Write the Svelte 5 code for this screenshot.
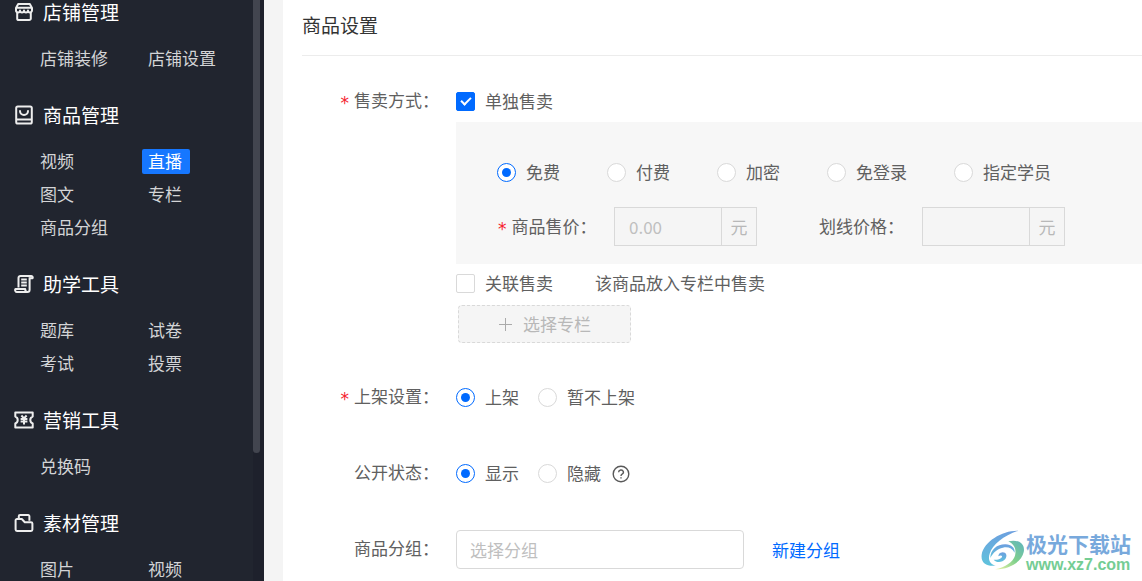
<script>
    const menu = [
        { title: '店铺管理', icon: 'shop', items: ['店铺装修', '店铺设置'] },
        { title: '商品管理', icon: 'goods', items: ['视频', '直播', '图文', '专栏', '商品分组'] },
        { title: '助学工具', icon: 'scroll', items: ['题库', '试卷', '考试', '投票'] },
        { title: '营销工具', icon: 'coupon', items: ['兑换码'] },
        { title: '素材管理', icon: 'folder', items: ['图片', '视频'] },
    ];
    const saleTypes = ['免费', '付费', '加密', '免登录', '指定学员'];

    let active = $state('商品管理/直播');
    let single = $state(true);
    let related = $state(false);
    let saleType = $state('免费');
    let shelf = $state('上架');
    let visible = $state('显示');
    let group = $state('');
</script>

{#snippet icon(name)}
    <svg class="icon" viewBox="0 0 20 20" aria-hidden="true">
        {#if name === 'shop'}
            <path d="M4.2 2h11.6L18 6v2.2a2 2 0 0 1-4 .4 2 2 0 0 1-4 0 2 2 0 0 1-4 0 2 2 0 0 1-4-.4V6z" />
            <path d="M2.5 5.8h15M3.2 10v6.4A1.6 1.6 0 0 0 4.8 18h10.4a1.6 1.6 0 0 0 1.6-1.6V10" />
        {:else if name === 'goods'}
            <rect x="2.2" y="1.5" width="15.6" height="17" rx="1.6" />
            <path d="M2.2 14.4h15.6M6 5.2v.8a4 4 0 0 0 8 0v-.8" />
        {:else if name === 'scroll'}
            <path d="M4.5 13.5V3.8A2 2 0 0 1 6.5 2H17a1.6 1.6 0 0 1 1.6 2.2H15.6" />
            <path d="M15.6 3.2v12.6a2.2 2.2 0 0 1-2.2 2.2H3a2 2 0 0 1-1.6-3h9.8c0 2 .6 3 2.2 3" />
            <path d="M7.2 5.5h5.6M7.2 8.5h5.6M7.2 11.5h5.6" />
        {:else if name === 'coupon'}
            <path d="M1.3 2.6h17.4v4a3.6 3.6 0 0 0 0 6.8v4H1.3v-4a3.6 3.6 0 0 0 0-6.8z" />
            <path d="M7.4 5.5 10 8.4l2.6-2.9M6.6 9h6.8M6.6 11.6h6.8M10 8.4v6" />
        {:else}
            <path d="M4.8 6V3.2A1.2 1.2 0 0 1 6 2h8.2a1.2 1.2 0 0 1 1.2 1.2v4.6" />
            <path d="M1.6 7.4A1.4 1.4 0 0 1 3 6h4.8l3 3.2h6.2a1.4 1.4 0 0 1 1.4 1.4v6a1.4 1.4 0 0 1-1.4 1.4H3a1.4 1.4 0 0 1-1.4-1.4z" />
        {/if}
    </svg>
{/snippet}

<div class="layout">
    <aside>
        <nav>
            {#each menu as section}
                <section>
                    <h2>{@render icon(section.icon)}{section.title}</h2>
                    <ul>
                        {#each section.items as item}
                            {@const key = section.title + '/' + item}
                            <li>
                                <a href="#/" class={{ active: active === key }} onclick={() => (active = key)}>{item}</a>
                            </li>
                        {/each}
                    </ul>
                </section>
            {/each}
        </nav>
        <div class="scrollbar"><div class="thumb"></div></div>
    </aside>

    <main>
        <h1>商品设置</h1>
        <form>
            <div class="field sale">
                <div class="label"><span class="mark">*</span>售卖方式：</div>
                <div class="content">
                    <div class="line">
                        <label class="option"><input type="checkbox" bind:checked={single} /><span>单独售卖</span></label>
                    </div>
                    <div class="panel">
                        <div class="types">
                            {#each saleTypes as type}
                                <label class="option"><input type="radio" name="type" value={type} bind:group={saleType} /><span>{type}</span></label>
                            {/each}
                        </div>
                        <div class="prices">
                            <label class="price-label required" for="price"><span class="mark">*</span>商品售价：</label>
                            <div class="price"><input id="price" type="text" placeholder="0.00" disabled /><span>元</span></div>
                            <label class="price-label" for="line-price">划线价格：</label>
                            <div class="price"><input id="line-price" type="text" disabled /><span>元</span></div>
                        </div>
                    </div>
                    <div class="line">
                        <label class="option"><input type="checkbox" bind:checked={related} /><span>关联售卖</span></label>
                        <span class="note">该商品放入专栏中售卖</span>
                    </div>
                    <button type="button" class="pick" disabled={!related}>
                        <svg viewBox="0 0 14 14" aria-hidden="true"><path d="M7.5 1v13M1 7.5h13" /></svg>
                        <span>选择专栏</span>
                    </button>
                </div>
            </div>

            <div class="field">
                <div class="label"><span class="mark">*</span>上架设置：</div>
                <div class="content choices">
                    {#each ['上架', '暂不上架'] as item}
                        <label class="option"><input type="radio" name="shelf" value={item} bind:group={shelf} /><span>{item}</span></label>
                    {/each}
                </div>
            </div>

            <div class="field">
                <div class="label">公开状态：</div>
                <div class="content choices">
                    {#each ['显示', '隐藏'] as item}
                        <label class="option"><input type="radio" name="visible" value={item} bind:group={visible} /><span>{item}</span></label>
                    {/each}
                    <svg class="help" viewBox="0 0 18 18" aria-hidden="true">
                        <circle cx="9" cy="9" r="7.8" />
                        <path d="M6.6 7.2a2.4 2.2 0 1 1 3.5 2c-.8.4-1.1.8-1.1 1.7M9 12.2v1.4" />
                    </svg>
                </div>
            </div>

            <div class="field">
                <label class="label" for="group">商品分组：</label>
                <div class="content choices">
                    <input id="group" class="group" type="text" placeholder="选择分组" bind:value={group} />
                    <a class="create" href="#/">新建分组</a>
                </div>
            </div>
        </form>
    </main>

    <div class="brand">
        <svg viewBox="3 8 138 132" aria-hidden="true">
            <defs>
                <linearGradient id="wave" x1="0" y1="0" x2="0" y2="1">
                    <stop offset="0" stop-color="#6d9fdf" />
                    <stop offset="1" stop-color="#5fc3dc" />
                </linearGradient>
                <linearGradient id="leaf" x1="1" y1="0" x2="0" y2="1">
                    <stop offset="0" stop-color="#5fb4c0" />
                    <stop offset="0.5" stop-color="#7fd08c" />
                    <stop offset="1" stop-color="#eef3a4" />
                </linearGradient>
            </defs>
            <path fill="url(#wave)" d="M118 10C72 8 14 42 8 82c-3 24 14 36 42 33-17-5-24-18-18-36 8-27 42-54 86-69z" />
            <path fill="url(#leaf)" d="M88 42c30-8 52 8 46 33-7 30-45 52-86 51 32-7 54-22 60-41 5-19-2-34-20-43z" />
            <path fill="url(#wave)" d="M34 92c0-26 22-42 46-41 17 1 28 10 27 25-8-14-20-18-35-15-17 3-29 14-38 31z" />
            <path fill="url(#wave)" d="M44 97c8 10 26 9 35-2 7-9 3-20-8-20-9 0-13 7-13 12 4-3 9-4 11-1 2 6-10 13-25 11z" />
        </svg>
        <div>
            <strong>极光下载站</strong>
            <span>www.xz7.com</span>
        </div>
    </div>
</div>

<style>
    :global(body) {
        margin: 0;
    }
    .layout {
        display: flex;
        position: relative;
        height: 100vh;
        overflow: hidden;
        background: #f4f4f4;
        color: #606060;
        font-family: "Noto Sans CJK SC", sans-serif;
        font-size: 17px;
        line-height: 25px;
    }
    h1, h2, ul {
        margin: 0;
        padding: 0;
        font-weight: 400;
    }
    a {
        text-decoration: none;
    }

    /* sidebar */
    aside {
        display: flex;
        flex: none;
        width: 264px;
        background: #21252f;
    }
    nav {
        flex: 1;
        overflow: hidden;
    }
    nav section {
        margin-bottom: 32px;
    }
    h2 {
        display: flex;
        align-items: center;
        gap: 9px;
        padding-left: 14px;
        color: #fff;
        font-size: 19px;
        line-height: 24px;
    }
    .icon {
        width: 20px;
        height: 20px;
        fill: none;
        stroke: #eee;
        stroke-width: 2;
        stroke-linejoin: round;
    }
    nav ul {
        display: grid;
        grid-template-columns: 108px 1fr;
        row-gap: 8px;
        margin-top: 22px;
        padding-left: 34px;
        list-style: none;
    }
    nav li {
        display: flex;
    }
    nav a {
        padding: 0 7px 1px 6px;
        border-radius: 2px;
        color: #d3d4d6;
        line-height: 24px;
    }
    nav a.active {
        padding-right: 8px;
        background: #1677ff;
        color: #fff;
    }
    .scrollbar {
        width: 11px;
        background: #1e212c;
    }
    .thumb {
        width: 7px;
        height: 78%;
        border-radius: 0 0 4px 4px;
        background: #42454f;
    }

    /* form */
    main {
        flex: 1;
        margin-left: 19px;
        padding-left: 19px;
        background: #fff;
    }
    h1 {
        padding: 12px 0 18px;
        border-bottom: 1px solid #ececec;
        color: #333;
        font-size: 19px;
    }
    form {
        padding-top: 26px;
    }
    .field {
        display: flex;
        margin-bottom: 37px;
    }
    .field.sale {
        margin-bottom: 35px;
    }
    .label {
        display: flex;
        flex: none;
        justify-content: flex-end;
        width: 137px;
        height: 36px;
        margin-right: 17px;
        line-height: 36px;
    }
    .mark {
        margin-right: 5px;
        padding-top: 3px;
        color: #f5222d;
        font-family: "DejaVu Sans", sans-serif;
    }
    .content {
        flex: 1;
    }
    .line {
        display: flex;
        align-items: center;
        height: 38px;
    }
    .option {
        display: flex;
        align-items: center;
        gap: 10px;
    }
    .option span, .note, .pick span {
        padding-bottom: 2px;
    }
    .option input {
        display: grid;
        place-items: center;
        flex: none;
        box-sizing: border-box;
        width: 19px;
        height: 19px;
        margin: 0;
        border: 1px solid #d9d9d9;
        appearance: none;
        background: #fff;
    }
    .option input[type="checkbox"] {
        border-radius: 2px;
    }
    .option input[type="radio"] {
        border-radius: 50%;
    }
    .option input:checked {
        border-color: #006aff;
    }
    .option input[type="checkbox"]:checked {
        background: #006aff;
    }
    .option input[type="checkbox"]:checked::before {
        content: "";
        width: 4px;
        height: 8px;
        margin-bottom: 2px;
        border: solid #fff;
        border-width: 0 2px 2px 0;
        transform: rotate(45deg);
    }
    .option input[type="radio"]:checked::before {
        content: "";
        width: 9px;
        height: 9px;
        border-radius: 50%;
        background: #006aff;
    }
    .panel {
        margin-top: 2px;
        padding: 37px 0 18px 41px;
        background: #f7f7f7;
    }
    .types {
        display: flex;
        gap: 47px;
    }
    .prices {
        display: flex;
        margin-top: 21px;
    }
    .price-label {
        display: flex;
        flex: none;
        width: 103px;
        height: 38px;
        line-height: 38px;
    }
    .price-label.required {
        box-sizing: border-box;
        width: 117px;
        padding-left: 1px;
    }
    .price {
        display: flex;
        box-sizing: border-box;
        width: 143px;
        height: 39px;
        margin-right: 62px;
        border: 1px solid #d9d9d9;
        background: #f5f5f5;
        color: #b8b8b8;
        line-height: 37px;
    }
    .price input {
        flex: 1;
        min-width: 0;
        padding: 0 14px;
        border: 0;
        background: none;
        font: inherit;
    }
    .price span {
        width: 34px;
        border-left: 1px solid #d9d9d9;
        text-align: center;
    }
    input::placeholder {
        color: #bfbfbf;
    }
    .note {
        margin-left: 42px;
    }
    .pick {
        display: flex;
        align-items: center;
        justify-content: center;
        gap: 11px;
        width: 173px;
        height: 38px;
        margin: 3px 0 0 2px;
        border: 1px dashed #d9d9d9;
        border-radius: 4px;
        background: #f5f5f5;
        color: #b8b8b8;
        font: inherit;
    }
    .pick svg {
        width: 14px;
        height: 14px;
        stroke: #aaa;
    }
    .choices {
        display: flex;
        align-items: center;
        gap: 19px;
        height: 39px;
    }
    .help {
        width: 18px;
        height: 18px;
        margin-left: -8px;
        fill: none;
        stroke: #595959;
        stroke-width: 1.4;
    }
    .group {
        box-sizing: border-box;
        width: 288px;
        height: 39px;
        padding: 0 13px;
        border: 1px solid #d9d9d9;
        border-radius: 4px;
        font: inherit;
    }
    .create {
        margin-left: 9px;
        color: #006aff;
    }

    /* site badge over the page corner */
    .brand {
        display: flex;
        position: absolute;
        right: 11px;
        bottom: 7px;
    }
    .brand svg {
        width: 46px;
        height: 44px;
    }
    .brand strong, .brand span {
        display: block;
    }
    .brand strong {
        color: #78a9dc;
        font-size: 21px;
        line-height: 26px;
    }
    .brand span {
        color: #74cd94;
        font: bold 16px/18px "Liberation Sans", sans-serif;
    }
</style>
